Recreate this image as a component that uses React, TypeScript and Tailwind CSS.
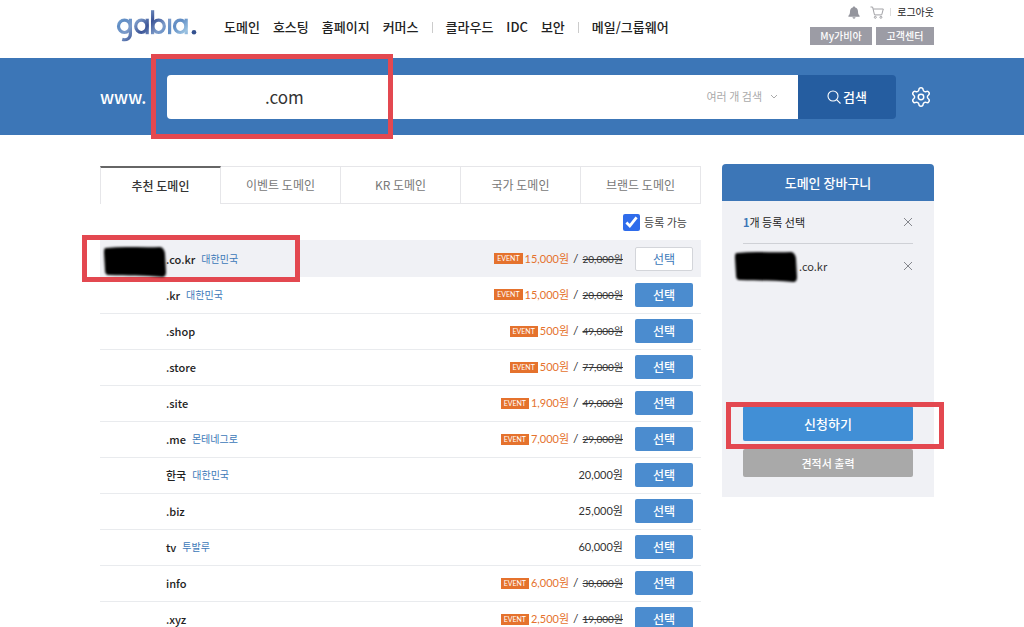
import type { ReactNode } from "react";
import { Settings } from "lucide-react";

type Domain = {
  ext: string;
  country?: string;
  price: string;
  event?: string;
  selected?: boolean;
};

const domains: Domain[] = [
  { ext: ".co.kr", country: "대한민국", price: "20,000원", event: "15,000원", selected: true },
  { ext: ".kr", country: "대한민국", price: "20,000원", event: "15,000원" },
  { ext: ".shop", price: "49,000원", event: "500원" },
  { ext: ".store", price: "77,000원", event: "500원" },
  { ext: ".site", price: "49,000원", event: "1,900원" },
  { ext: ".me", country: "몬테네그로", price: "29,000원", event: "7,000원" },
  { ext: "한국", country: "대한민국", price: "20,000원" },
  { ext: ".biz", price: "25,000원" },
  { ext: "tv", country: "투발루", price: "60,000원" },
  { ext: "info", price: "30,000원", event: "6,000원" },
  { ext: ".xyz", price: "19,000원", event: "2,500원" },
];

const tabs = ["추천 도메인", "이벤트 도메인", "KR 도메인", "국가 도메인", "브랜드 도메인"];

const navGroups = [
  ["도메인", "호스팅", "홈페이지", "커머스"],
  ["클라우드", "IDC", "보안"],
  ["메일/그룹웨어"],
];

function Logo() {
  return (
    <svg viewBox="0 0 82 34" className="block h-[34px] w-[82px]" role="img" aria-label="gabia">
      <defs>
        <linearGradient id="logo" gradientUnits="userSpaceOnUse" x1="0" y1="4" x2="22" y2="26" spreadMethod="reflect">
          <stop offset="0" stopColor="#9cc3e2" />
          <stop offset="0.35" stopColor="#5f8cc4" />
          <stop offset="0.65" stopColor="#7d9cca" />
          <stop offset="1" stopColor="#3c5496" />
        </linearGradient>
      </defs>
      <g fill="none" stroke="url(#logo)" strokeWidth="3.2">
        <ellipse cx="8.4" cy="17.3" rx="5.9" ry="6.2" />
        <path d="M14.4 9.700V24.500c0 4.800-3.400 7.200-8.200 5.900" />
        <ellipse cx="25.400" cy="17.300" rx="5.700" ry="6.200" />
        <path d="M31.200 9.700v15.500" />
        <path d="M36.600 1.200v24" />
        <ellipse cx="42.600" cy="17.300" rx="5.700" ry="6.200" />
        <path d="M53.600 9.700v15.500" />
        <ellipse cx="64.200" cy="17.300" rx="5.700" ry="6.200" />
        <path d="M70.200 9.700v15.500" />
      </g>
      <circle cx="78" cy="23.200" r="2.300" fill="#33508f" />
    </svg>
  );
}

function BellIcon() {
  return (
    <svg viewBox="0 0 12 13" className="h-[13px] w-3" fill="#94959d" aria-hidden="true">
      <path d="M6 .4c.8 0 1.200.5 1.200 1.200C9.200 2.200 10 3.700 10 5.600c0 2.300.5 3.200 1.600 4.200v.9H.4v-.9C1.500 8.800 2 7.900 2 5.600c0-1.900.8-3.400 2.800-4C4.800.9 5.200.4 6 .4Z" />
      <path d="M4.500 11.300h3c0 .8-.6 1.400-1.500 1.400s-1.500-.6-1.500-1.400Z" />
    </svg>
  );
}

function CartIcon() {
  return (
    <svg viewBox="0 0 14 13" className="h-[13px] w-3.5" fill="none" stroke="#a2a2a6" strokeWidth="1" aria-hidden="true">
      <path d="M.5 1h2.100l1.900 7.900h7.200L13.300 3H3.200" />
      <circle cx="5.300" cy="11.300" r="1" />
      <circle cx="10.900" cy="11.300" r="1" />
    </svg>
  );
}

function SearchIcon() {
  return (
    <svg viewBox="0 0 14 14" className="h-3.5 w-3.5" fill="none" stroke="#ffffff" strokeWidth="1.100" aria-hidden="true">
      <circle cx="6" cy="6" r="5" />
      <path d="m9.600 9.600 3.900 3.900" />
    </svg>
  );
}

function CloseIcon() {
  return (
    <svg viewBox="0 0 10 10" className="h-2.5 w-2.5" stroke="#85878d" strokeWidth="1" aria-hidden="true">
      <path d="m1 1 8 8M9 1 1 9" />
    </svg>
  );
}

function Redaction({ className }: { className: string }) {
  return (
    <svg viewBox="0 0 72 38" className={`absolute z-10 h-[38px] w-[72px] ${className}`} aria-hidden="true">
      <path d="M6 5c18-2 36 0 54-1 3 0 5 4 5 7l1 18c0 3-1 5-4 5-19-2-34-1-53-2-3 0-4-2-4-5L4 10c0-3 0-5 2-5Z" fill="#000000" className="blur-[1px]" />
    </svg>
  );
}

function Highlight({ className }: { className: string }) {
  return <div aria-hidden="true" className={`pointer-events-none absolute border-5 border-[#e34850] ${className}`} />;
}

function Container({ children, className }: { children: ReactNode; className: string }) {
  return <div className={`mx-auto flex max-w-[1024px] pr-[90px] pl-[100px] ${className}`}>{children}</div>;
}

function DomainRow({ domain }: { domain: Domain }) {
  return (
    <tr className={domain.selected ? "h-[37px] bg-[#f0f1f5]" : "h-9 border-b border-[#e9ebee]"}>
      <td className="relative p-0 pl-[66px] text-left whitespace-nowrap">
        {domain.selected && (
          <>
            <Redaction className="top-[3px] left-0" />
            <Highlight className="-top-[5px] -left-[18px] h-[47px] w-[218px]" />
          </>
        )}
        <div className="flex items-center gap-1.5 leading-5">
          <span className="text-[11px] font-medium text-[#222222]">{domain.ext}</span>
          {domain.country && <span className="text-[10px] text-[#3c78b8]">{domain.country}</span>}
        </div>
      </td>
      <td className="p-0 pr-3">
        <div className="flex items-center justify-end font-[Lato,'Noto_Sans_CJK_KR',sans-serif] leading-5 whitespace-nowrap">
          {domain.event ? (
            <>
              <span className="mr-0.5 bg-[#e5722d] px-[3px] text-[7px] leading-[11px] text-white">EVENT</span>
              <span className="text-[11px] text-[#e5722d]">{domain.event}</span>
              <span className="mx-1 text-xs text-[#333333]">/</span>
              <del className="text-[10px] text-[#333333]">{domain.price}</del>
            </>
          ) : (
            <span className="text-[11px] text-[#333333]">{domain.price}</span>
          )}
        </div>
      </td>
      <td className="w-[66px] p-0 pr-2 align-middle">
        <button
          type="button"
          className={`block h-6 w-[58px] rounded-xs text-xs ${
            domain.selected ? "border border-[#d3d5da] bg-white text-[#3c78b8]" : "bg-[#4b8ccf] font-medium text-white"
          }`}
        >
          선택
        </button>
      </td>
    </tr>
  );
}

export default function App() {
  return (
    <div className="min-h-screen bg-white font-['Noto_Sans_CJK_KR',sans-serif] text-[#222222]">
      <header>
        <Container className="h-[58px] items-start">
          <a href="#home" className="mt-[9px] ml-4">
            <Logo />
          </a>
          <nav className="mt-[17px] ml-[26px] flex items-center text-[13px] leading-5 font-medium whitespace-nowrap">
            {navGroups.map((group, i) => (
              <div key={group[0]} className="flex items-center">
                {i > 0 && <span className="mx-[13px] h-[11px] w-px bg-[#cccccc]" />}
                <div className="flex gap-[13px]">
                  {group.map((item) => (
                    <a key={item} href="#menu">
                      {item}
                    </a>
                  ))}
                </div>
              </div>
            ))}
          </nav>
          <div className="mt-1 ml-auto flex flex-col items-end gap-[7px]">
            <div className="flex items-center text-[10px] leading-4">
              <button type="button" aria-label="알림" className="mr-2.5">
                <BellIcon />
              </button>
              <button type="button" aria-label="장바구니" className="mr-1.5">
                <CartIcon />
              </button>
              <span className="mr-1.5 h-2 w-px bg-[#dddddd]" />
              <a href="#logout">로그아웃</a>
            </div>
            <div className="flex gap-1 text-center text-[10px] leading-[18px] font-medium text-white">
              <a href="#my" className="w-[62px] bg-[#9c9ca5]">
                My가비아
              </a>
              <a href="#help" className="w-[58px] bg-[#9c9ca5]">
                고객센터
              </a>
            </div>
          </div>
        </Container>
      </header>

      <section className="bg-[#3c76b7]">
        <Container className="h-[77px] items-center">
          <label htmlFor="domain" className="w-[67px] text-[17px] leading-6 font-medium text-white">
            www.
          </label>
          <form className="relative flex h-11 flex-1">
            <input
              id="domain"
              type="text"
              defaultValue=".com"
              className="min-w-0 flex-1 rounded-l-sm bg-white pl-[98px] text-[17px] text-[#333333] outline-none"
            />
            <button type="button" className="flex items-center gap-2 bg-white pr-5 text-[11px] text-[#aaaaaa]">
              여러 개 검색
              <svg viewBox="0 0 8 5" className="h-[5px] w-2" fill="none" stroke="#aaaaaa" aria-hidden="true">
                <path d="m1 1 3 3 3-3" />
              </svg>
            </button>
            <button
              type="submit"
              className="flex w-[98px] items-center justify-center gap-0.5 rounded-r-sm bg-[#255da0] text-[13px] font-medium text-white"
            >
              <SearchIcon />
              검색
            </button>
            <Highlight className="-top-[21px] -left-4 h-[85px] w-[242px]" />
          </form>
          <button type="button" aria-label="설정" className="mr-0.5 ml-3.5">
            <Settings size={22} strokeWidth={1.600} color="#ffffff" />
          </button>
        </Container>
      </section>

      <Container className="items-start gap-[21px] pt-[29px]">
        <main className="min-w-0 flex-1">
          <div role="tablist" className="mt-0.5 flex text-xs">
            {tabs.map((tab, i) => (
              <button
                key={tab}
                type="button"
                role="tab"
                aria-selected={i === 0}
                className={`h-[38px] flex-1 border-r border-[#e6e6e9] ${
                  i === 0
                    ? "border-t-2 border-l border-t-[#666666] font-medium text-[#333333]"
                    : "border-y text-[#777777]"
                }`}
              >
                {tab}
              </button>
            ))}
          </div>
          <div className="flex h-9 items-center justify-end pr-3.5">
            <label htmlFor="available" className="flex items-center gap-1 text-[11px] text-[#444444]">
              <input id="available" type="checkbox" defaultChecked className="h-[17px] w-[17px] accent-[#2f6ceb]" />
              등록 가능
            </label>
          </div>
          <table className="w-full border-collapse">
            <tbody>
              {domains.map((domain) => (
                <DomainRow key={domain.ext} domain={domain} />
              ))}
            </tbody>
          </table>
        </main>

        <aside className="h-[333px] w-[212px] shrink-0 rounded-t-sm bg-[#f0f1f5]">
          <h2 className="rounded-t-sm bg-[#3c76b7] text-center text-[13px] leading-[37px] font-medium text-white">
            도메인 장바구니
          </h2>
          <div className="mx-[21px]">
            <div className="flex h-[43px] items-center justify-between border-b border-[#cfd1d6] text-[11px]">
              <p>
                <strong className="font-bold text-[#3c76b7]">1</strong>개 등록 선택
              </p>
              <button type="button" aria-label="모두 삭제">
                <CloseIcon />
              </button>
            </div>
            <div className="relative flex h-11 items-center justify-between text-[11px] text-[#333333]">
              <Redaction className="top-1 -left-3" />
              <span className="pl-14">.co.kr</span>
              <button type="button" aria-label=".co.kr 삭제">
                <CloseIcon />
              </button>
            </div>
            <div className="relative mt-[118px] flex flex-col gap-2">
              <button type="button" className="h-[35px] rounded-xs bg-[#418fd6] text-[13px] font-medium text-white">
                신청하기
              </button>
              <button type="button" className="h-7 rounded-xs bg-[#a9a9a9] text-[11px] font-medium text-white">
                견적서 출력
              </button>
              <Highlight className="-top-1 -left-[17px] h-[47px] w-[218px]" />
            </div>
          </div>
        </aside>
      </Container>
    </div>
  );
}
